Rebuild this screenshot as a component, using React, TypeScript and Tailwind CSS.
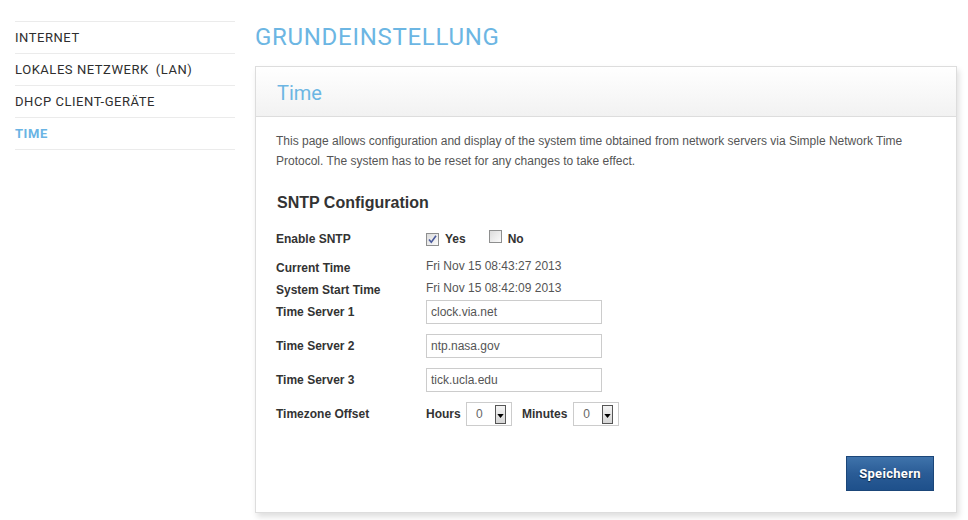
import React from "react";

const din = { fontFamily: "Roboto, 'Liberation Sans', sans-serif" };
const arial = { fontFamily: "'Liberation Sans', Arial, sans-serif" };

function Checkbox({ checked }: { checked: boolean }) {
  return (
    <span className="relative inline-block w-[13px] h-[13px] border border-[#8e8f8f] bg-gradient-to-br from-[#dcdcdc] to-[#fbfbfb]">
      {checked && (
        <svg viewBox="0 0 11 11" className="absolute left-0 top-0 w-[11px] h-[11px]">
          <path d="M2 5.5 L4.3 8.2 L9 1.8" fill="none" stroke="#4a5a9c" strokeWidth="1.6" />
        </svg>
      )}
    </span>
  );
}

function Select() {
  return (
    <div className="flex items-center justify-between w-[46px] h-[24px] border border-[#cccccc] bg-white pl-[9px] pr-[5px] text-[12px] text-[#666]">
      <span>0</span>
      <span className="flex items-center justify-center w-[11px] h-[19px] border border-[#555] bg-gradient-to-b from-[#f4f4f4] to-[#d6d6d6]">
        <svg viewBox="0 0 8 5" className="w-[7px] h-[4px] mt-[3px]">
          <path d="M0 0 L8 0 L4 5 Z" fill="#000" />
        </svg>
      </span>
    </div>
  );
}

function TextInput({ value }: { value: string }) {
  return (
    <div className="flex items-center w-[176px] h-[24px] border border-[#cccccc] pl-[4px] text-[12px] text-[#555]">
      {value}
    </div>
  );
}

export default function App() {
  const nav: React.ReactNode[] = [
    "INTERNET",
    <>
      LOKALES NETZWERK<span className="ml-[7px]">(LAN)</span>
    </>,
    "DHCP CLIENT-GERÄTE",
    "TIME",
  ];
  return (
    <div className="w-[968px] h-[520px] bg-white flex overflow-hidden" style={arial}>
      <div className="w-[220px] ml-[15px] pt-[21px] shrink-0">
        <div className="border-t border-[#ebebeb]">
          {nav.map((n, i) => (
            <div
              key={i}
              className={`h-[32px] flex items-center border-b border-[#ebebeb] text-[13px] tracking-[0.55px] ${
                i === 3 ? "text-[#6ab4e4] font-bold" : "text-[#2e2e2e]"
              }`}
              style={din}
            >
              {n}
            </div>
          ))}
        </div>
      </div>
      <div className="ml-[20px] w-[702px] shrink-0 pt-[22px]">
        <h1 className="text-[24px] leading-[30px] text-[#6cb6e3] tracking-[0.7px]" style={din}>
          GRUNDEINSTELLUNG
        </h1>
        <div className="mt-[14px] border border-[#dddddd] bg-white shadow-[2px_4px_6px_rgba(0,0,0,0.13)]">
          <div className="h-[50px] border-b border-[#dddddd] bg-gradient-to-b from-[#ffffff] to-[#f2f2f2] pl-[21px] pt-[12px]">
            <div className="text-[20px] leading-[28px] text-[#6cb6e3]" style={din}>
              Time
            </div>
          </div>
          <div className="pl-[20px] pr-[22px] pt-[14px] pb-[21px]">
            <p className="text-[12px] leading-[20px] text-[#555]">
              This page allows configuration and display of the system time obtained from network servers via Simple Network Time
              Protocol. The system has to be reset for any changes to take effect.
            </p>
            <h2 className="mt-[22px] text-[16px] leading-[20px] font-bold text-[#333] pl-[1px]">SNTP Configuration</h2>
            <div className="mt-[14px] text-[12px] text-[#333]">
              <div className="flex items-center h-[24px]">
                <div className="w-[150px] font-bold">Enable SNTP</div>
                <div className="flex items-center font-bold">
                  <Checkbox checked />
                  <span className="ml-[6px]">Yes</span>
                  <span className="ml-[23px]">
                    <Checkbox checked={false} />
                  </span>
                  <span className="ml-[6px]">No</span>
                </div>
              </div>
              <div className="flex items-center h-[22px] mt-[5px]">
                <div className="w-[150px] font-bold pt-[2px]">Current Time</div>
                <div className="text-[#555] pb-[2px]">Fri Nov 15 08:43:27 2013</div>
              </div>
              <div className="flex items-center h-[22px]">
                <div className="w-[150px] font-bold pt-[2px]">System Start Time</div>
                <div className="text-[#555] pb-[2px]">Fri Nov 15 08:42:09 2013</div>
              </div>
              <div className="flex items-center h-[24px]">
                <div className="w-[150px] font-bold pb-[1px]">Time Server 1</div>
                <TextInput value="clock.via.net" />
              </div>
              <div className="flex items-center h-[24px] mt-[10px]">
                <div className="w-[150px] font-bold pb-[1px]">Time Server 2</div>
                <TextInput value="ntp.nasa.gov" />
              </div>
              <div className="flex items-center h-[24px] mt-[10px]">
                <div className="w-[150px] font-bold pb-[1px]">Time Server 3</div>
                <TextInput value="tick.ucla.edu" />
              </div>
              <div className="flex items-center h-[24px] mt-[10px]">
                <div className="w-[150px] font-bold pb-[1px]">Timezone Offset</div>
                <div className="flex items-center">
                  <span className="font-bold w-[40px]">Hours</span>
                  <Select />
                  <span className="font-bold ml-[10px] mr-[6px]">Minutes</span>
                  <Select />
                </div>
              </div>
            </div>
            <div className="flex justify-end mt-[30px]">
              <button
                className="w-[88px] h-[35px] border border-[#1b4679] bg-gradient-to-b from-[#3f73ab] via-[#2a5c96] to-[#1e508b] text-white text-[13px] font-bold tracking-[0.3px] [text-shadow:0_1px_1px_rgba(0,0,0,0.6)]"
                style={din}
              >
                Speichern
              </button>
            </div>
          </div>
        </div>
      </div>
    </div>
  );
}
